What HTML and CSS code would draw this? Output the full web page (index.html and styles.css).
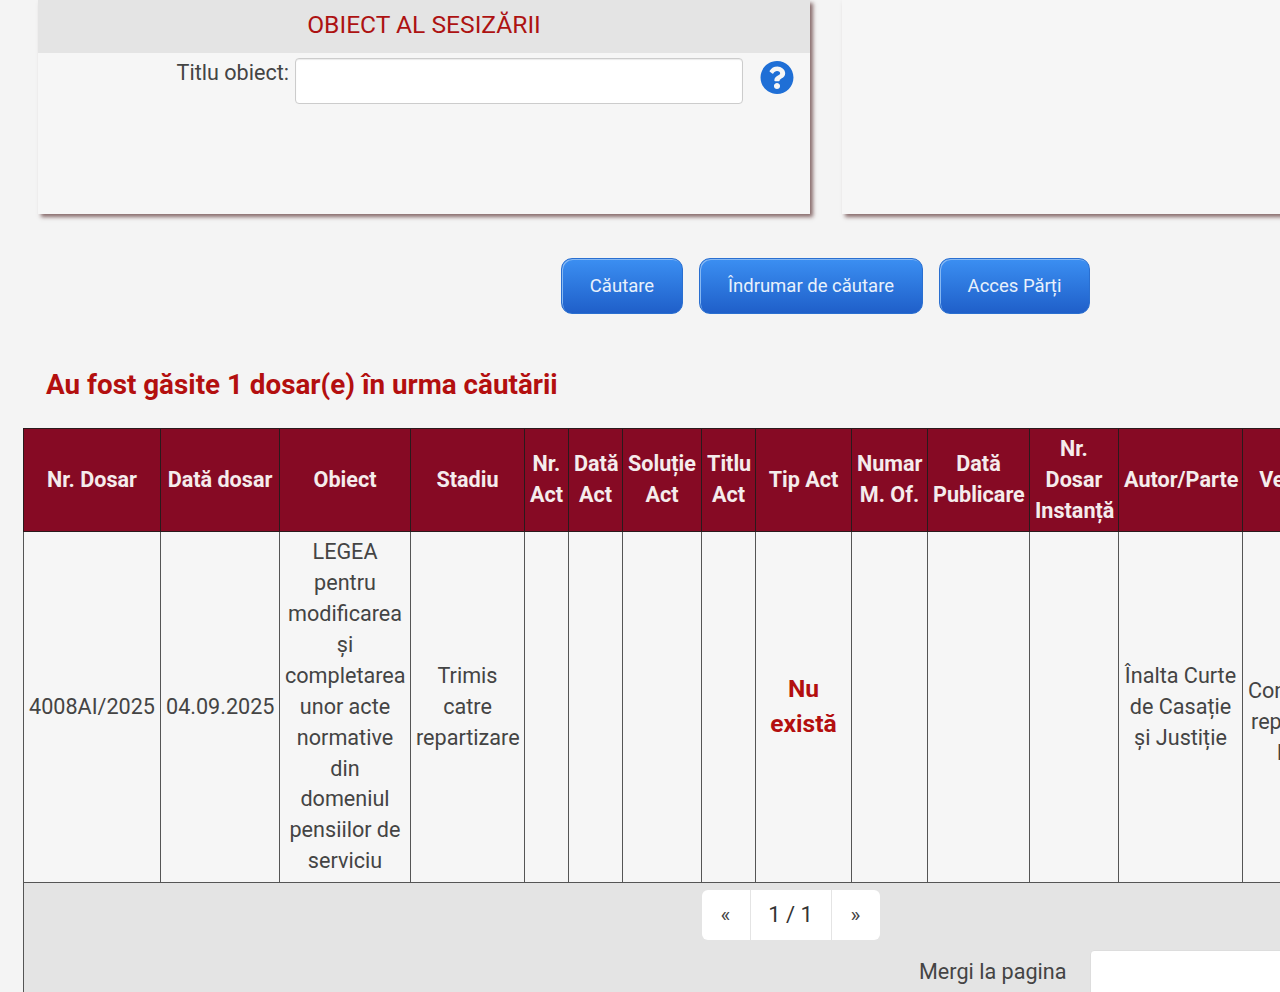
FILE: index.html
```html
<!DOCTYPE html>
<html lang="ro">
<head>
    <meta charset="UTF-8">
    <title>Căutare dosare</title>
    <link rel="stylesheet" href="styles.css">
</head>
<body>
    <div class="panels">
        <div class="panel">
            <div class="panel-title">OBIECT AL SESIZĂRII</div>
            <div class="field">
                <label class="field-label">Titlu obiect:</label>
                <input type="text" class="field-input">
                <svg class="help-icon" viewBox="0 0 512 512"><path d="M504 256c0 136.997-111.043 248-248 248S8 392.997 8 256C8 119.083 119.043 8 256 8s248 111.083 248 248zM262.655 90c-54.497 0-89.255 22.957-116.549 63.758-3.536 5.286-2.353 12.415 2.715 16.258l34.699 26.31c5.205 3.947 12.621 3.008 16.665-2.122 17.864-22.658 30.113-35.797 57.303-35.797 20.429 0 45.698 13.148 45.698 32.958 0 14.976-12.363 22.667-32.534 33.976C247.128 238.528 216 254.941 216 296v4c0 6.627 5.373 12 12 12h56c6.627 0 12-5.373 12-12v-1.333c0-28.462 83.186-29.647 83.186-106.667 0-58.002-60.165-102-116.531-102zM256 338c-25.365 0-46 20.635-46 46 0 25.364 20.635 46 46 46s46-20.636 46-46c0-25.365-20.635-46-46-46z"/></svg>
            </div>
        </div>
        <div class="panel panel-side"></div>
    </div>

    <div class="actions">
        <button class="btn btn-search">Căutare</button>
        <button class="btn btn-guide">Îndrumar de căutare</button>
        <button class="btn btn-access">Acces Părți</button>
    </div>

    <h2 class="result-title">Au fost găsite 1 dosar(e) în urma căutării</h2>

    <table class="results">
        <colgroup>
            <col class="c1"><col class="c2"><col class="c3"><col class="c4"><col class="c5">
            <col class="c6"><col class="c7"><col class="c8"><col class="c9"><col class="c10">
            <col class="c11"><col class="c12"><col class="c13"><col class="c14"><col class="c15">
        </colgroup>
        <thead>
            <tr>
                <th>Nr. Dosar</th>
                <th>Dată dosar</th>
                <th>Obiect</th>
                <th>Stadiu</th>
                <th>Nr. Act</th>
                <th>Dată Act</th>
                <th>Soluție Act</th>
                <th>Titlu Act</th>
                <th>Tip Act</th>
                <th>Numar M. Of.</th>
                <th>Dată Publicare</th>
                <th>Nr. Dosar Instanță</th>
                <th>Autor/Parte</th>
                <th>Vezi Act.</th>
                <th>Document</th>
            </tr>
        </thead>
        <tbody>
            <tr>
                <td>4008AI/2025</td>
                <td>04.09.2025</td>
                <td>LEGEA pentru modificarea și completarea unor acte normative din domeniul pensiilor de serviciu</td>
                <td>Trimis catre repartizare</td>
                <td></td>
                <td></td>
                <td></td>
                <td></td>
                <td class="missing">Nu există</td>
                <td></td>
                <td></td>
                <td></td>
                <td>Înalta Curte de Casație și Justiție</td>
                <td>Lege<br>Conformare<br>repartizării<br>legile</td>
                <td></td>
            </tr>
        </tbody>
        <tfoot>
            <tr>
                <td colspan="15" class="pager-cell">
                    <div class="pager">
                        <span class="pager-item pager-arrow">«</span>
                        <span class="pager-item pager-current">1 / 1</span>
                        <span class="pager-item pager-arrow">»</span>
                    </div>
                    <div class="goto">
                        <label class="goto-label">Mergi la pagina</label>
                        <input type="text" class="goto-input">
                    </div>
                </td>
            </tr>
        </tfoot>
    </table>
</body>
</html>
```

FILE: styles.css
```css
html, body {
    height: 992px;
    overflow: hidden;
}
body {
    margin: 0;
    background: #f4f4f4;
    color: #444;
    font-family: Roboto, "Liberation Sans", sans-serif;
    font-size: 21.6px;
    line-height: 30.9px;
}

/* panouri de sus */
.panels {
    display: flex;
    gap: 32px;
    padding-left: 38px;
}
.panel {
    flex-shrink: 0;
    width: 772px;
    height: 214px;
    background: #f6f6f6;
    box-shadow: 3px 3px 4px rgba(90, 50, 50, 0.7);
}
.panel-side {
    width: 500px;
}
.panel-title {
    height: 53px;
    background: #e4e4e4;
    color: #ad1212;
    font-size: 24.6px;
    line-height: 49px;
    text-align: center;
}
.field {
    display: flex;
    align-items: flex-start;
    padding-top: 5px;
}
.field-label {
    width: 251px;
    text-align: right;
    line-height: 30px;
}
.field-input {
    width: 448px;
    height: 46px;
    margin-left: 6px;
    box-sizing: border-box;
    background: #fff;
    border: 1px solid #ccc;
    border-radius: 4px;
    box-shadow: inset 0 1px 1px rgba(0, 0, 0, 0.08);
}
.help-icon {
    width: 34px;
    height: 35px;
    margin: 2px 0 0 17px;
    fill: #1f6fd6;
}

/* butoane */
.actions {
    display: flex;
    gap: 16px;
    margin-top: 44px;
    padding-left: 561px;
}
.btn {
    height: 56px;
    box-sizing: border-box;
    padding: 0;
    background: linear-gradient(#3b8ff2, #1f5fc9);
    border: 1px solid #2a6fd0;
    border-radius: 11px;
    box-shadow: inset 1px 1px 0 #86b8f3;
    color: #e8f1fc;
    font-family: inherit;
    font-size: 18.5px;
}
.btn-search { width: 122px; }
.btn-guide { width: 224px; }
.btn-access { width: 151px; }

.result-title {
    margin: 51px 0 23px 46px;
    color: #b30f0f;
    font-size: 27.8px;
    font-weight: 700;
    line-height: 40px;
}

/* tabel rezultate */
.results {
    width: 1534px;
    margin-left: 23px;
    border-collapse: collapse;
    table-layout: fixed;
    text-align: center;
}
.c1 { width: 137px; }
.c2 { width: 119px; }
.c3 { width: 131px; }
.c4 { width: 114px; }
.c5 { width: 44px; }
.c6 { width: 54px; }
.c7 { width: 79px; }
.c8 { width: 54px; }
.c9 { width: 96px; }
.c10 { width: 76px; }
.c11 { width: 102px; }
.c12 { width: 89px; }
.c13 { width: 124px; }
.c14 { width: 120px; }
.c15 { width: 195px; }

.results th {
    padding: 5px 5px 4.5px;
    background: #860a24;
    border: 1px solid #2a1a1c;
    color: #f5ecec;
    font-weight: 700;
}
.results td {
    padding: 5px;
    background: #f6f6f6;
    border: 1px solid #555;
}
.results .missing {
    padding-bottom: 7px;
    color: #b30f0f;
    font-size: 24.6px;
    font-weight: 700;
    line-height: 35px;
}
.results .pager-cell {
    height: 120px;
    padding: 7px 0 0;
    background: #e4e4e4;
    text-align: left;
    vertical-align: top;
}

/* paginare */
.pager {
    display: flex;
    width: 178px;
    height: 50px;
    margin: 0 auto;
    background: #fff;
    border-radius: 6px;
}
.pager-item {
    box-sizing: border-box;
    line-height: 50px;
    text-align: center;
}
.pager-arrow {
    width: 48px;
    font-size: 21px;
}
.pager-current {
    width: 82px;
    border-left: 1px solid #e4e4e4;
    border-right: 1px solid #e4e4e4;
    color: #333;
    font-size: 22px;
}
.goto {
    display: flex;
    align-items: flex-start;
    margin: 10px 0 0 895px;
}
.goto-label {
    width: 171px;
    padding-top: 7px;
}
.goto-input {
    width: 300px;
    height: 50px;
    box-sizing: border-box;
    background: #fff;
    border: 1px solid #ddd;
    border-radius: 4px;
}
```
